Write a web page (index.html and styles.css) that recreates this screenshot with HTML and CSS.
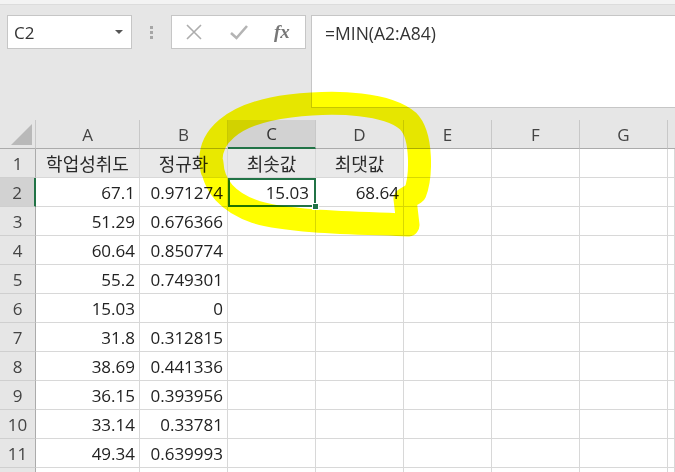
FILE: index.html
```html
<!DOCTYPE html>
<html lang="ko">
<head>
<meta charset="utf-8">
<link rel="stylesheet" href="styles.css">
</head>
<body>
<div class="app">
  <div class="topstrip"></div>
  <div class="toolbar">
    <div class="namebox"><span>C2</span><span class="caret"></span></div>
    <div class="grip"><i></i><i></i><i></i></div>
    <div class="fbtns">
      <svg class="ico" width="22" height="22" viewBox="0 0 22 22"><path d="M4 4 L18 18 M18 4 L4 18" stroke="#adadad" stroke-width="1.6" fill="none"/></svg>
      <svg class="ico" width="22" height="22" viewBox="0 0 22 22"><path d="M3 12 L8.5 17 L19 5" stroke="#b4b4b4" stroke-width="2.6" fill="none"/></svg>
      <span class="fx">fx</span>
    </div>
    <div class="formula">=MIN(A2:A84)</div>
  </div>
  <div class="sheet">
    <div class="corner"><span class="tri"></span></div>
    <div class="ch">A</div><div class="ch">B</div><div class="ch sel">C</div><div class="ch">D</div><div class="ch">E</div><div class="ch">F</div><div class="ch">G</div><div class="ch last"></div>

    <div class="rh">1</div>
    <div class="c hd ko">학업성취도</div><div class="c hd ko">정규화</div><div class="c hd ko">최솟값</div><div class="c hd ko">최댓값</div><div class="c"></div><div class="c"></div><div class="c"></div><div class="c"></div>

    <div class="rh sel">2</div>
    <div class="c n">67.1</div><div class="c n">0.971274</div><div class="c n active">15.03<span class="handle"></span></div><div class="c n">68.64</div><div class="c"></div><div class="c"></div><div class="c"></div><div class="c"></div>

    <div class="rh">3</div>
    <div class="c n">51.29</div><div class="c n">0.676366</div><div class="c"></div><div class="c"></div><div class="c"></div><div class="c"></div><div class="c"></div><div class="c"></div>

    <div class="rh">4</div>
    <div class="c n">60.64</div><div class="c n">0.850774</div><div class="c"></div><div class="c"></div><div class="c"></div><div class="c"></div><div class="c"></div><div class="c"></div>

    <div class="rh">5</div>
    <div class="c n">55.2</div><div class="c n">0.749301</div><div class="c"></div><div class="c"></div><div class="c"></div><div class="c"></div><div class="c"></div><div class="c"></div>

    <div class="rh">6</div>
    <div class="c n">15.03</div><div class="c n">0</div><div class="c"></div><div class="c"></div><div class="c"></div><div class="c"></div><div class="c"></div><div class="c"></div>

    <div class="rh">7</div>
    <div class="c n">31.8</div><div class="c n">0.312815</div><div class="c"></div><div class="c"></div><div class="c"></div><div class="c"></div><div class="c"></div><div class="c"></div>

    <div class="rh">8</div>
    <div class="c n">38.69</div><div class="c n">0.441336</div><div class="c"></div><div class="c"></div><div class="c"></div><div class="c"></div><div class="c"></div><div class="c"></div>

    <div class="rh">9</div>
    <div class="c n">36.15</div><div class="c n">0.393956</div><div class="c"></div><div class="c"></div><div class="c"></div><div class="c"></div><div class="c"></div><div class="c"></div>

    <div class="rh">10</div>
    <div class="c n">33.14</div><div class="c n">0.33781</div><div class="c"></div><div class="c"></div><div class="c"></div><div class="c"></div><div class="c"></div><div class="c"></div>

    <div class="rh">11</div>
    <div class="c n">49.34</div><div class="c n">0.639993</div><div class="c"></div><div class="c"></div><div class="c"></div><div class="c"></div><div class="c"></div><div class="c"></div>

    <div class="rh"></div>
    <div class="c"></div><div class="c"></div><div class="c"></div><div class="c"></div><div class="c"></div><div class="c"></div><div class="c"></div><div class="c"></div>
  </div>
  <svg class="marker" width="675" height="472" viewBox="0 0 675 472">
    <path d="M212 170 C 205 138, 232 113, 290 106 C 340 100, 388 104, 408 121 C 423 136, 421 178, 415 193 L 405 199 L 408 225 C 370 223, 292 223, 256 212 C 229 203, 213 186, 212 163" fill="none" stroke="#ffff00" stroke-width="23" stroke-linecap="round" stroke-linejoin="round"/>
  </svg>
</div>
</body>
</html>
```
FILE: styles.css
```css
* { box-sizing: border-box; }
html, body { margin: 0; padding: 0; }
body {
  width: 675px;
  height: 472px;
  overflow: hidden;
  background: #e6e6e6;
  font-family: "Open Sans", "Noto Sans", "Noto Sans CJK KR", sans-serif;
  color: #222;
}
.app { position: relative; width: 675px; height: 472px; overflow: hidden; }
.topstrip {
  height: 5px;
  background: #f3f3f3;
  border-bottom: 1px solid #dcdcdc;
}
.toolbar {
  display: flex;
  align-items: flex-start;
  padding: 10px 0 0 7px;
  height: 115px;
}
.namebox {
  width: 125px;
  height: 34px;
  background: #fff;
  border: 1px solid #c6c6c6;
  display: flex;
  align-items: center;
  justify-content: space-between;
  padding: 0 8px 0 6px;
  font-size: 17px;
  color: #333;
}
.caret {
  width: 0; height: 0;
  border-left: 4px solid transparent;
  border-right: 4px solid transparent;
  border-top: 4px solid #555;
}
.grip {
  width: 39px;
  height: 34px;
  display: flex;
  flex-direction: column;
  align-items: center;
  justify-content: center;
  gap: 2px;
}
.grip i {
  display: block;
  width: 3px; height: 3px;
  background: #a6a6a6;
}
.fbtns {
  width: 135px;
  height: 34px;
  background: #fff;
  border: 1px solid #c6c6c6;
  display: flex;
  align-items: center;
  padding-left: 11px;
  gap: 23px;
}
.ico { display: block; }
.fx {
  font-family: "Liberation Serif", "DejaVu Serif", serif;
  font-style: italic;
  font-weight: bold;
  font-size: 19px;
  color: #777;
  margin-left: 1px;
}
.formula {
  margin-left: 5px;
  flex: 1;
  height: 93px;
  background: #fff;
  border: 1px solid #c6c6c6;
  border-right: none;
  padding: 5px 0 0 13px;
  font-size: 17.5px;
  color: #333;
}
.sheet {
  display: grid;
  grid-template-columns: 36px 104px 88px 88px 88px 88px 88px 88px 1fr;
  grid-auto-rows: 29px;
  background: #fff;
}
.corner {
  background: #e6e6e6;
  border-right: 1px solid #c8c8c8;
  border-bottom: 1px solid #ababab;
  position: relative;
}
.tri {
  position: absolute;
  right: 3px;
  bottom: 3px;
  width: 0; height: 0;
  border-left: 21px solid transparent;
  border-bottom: 21px solid #b9b9b9;
}
.ch {
  background: #e6e6e6;
  border-right: 1px solid #c8c8c8;
  border-bottom: 1px solid #ababab;
  display: flex;
  align-items: center;
  justify-content: center;
  font-size: 17px;
  color: #444;
}
.ch.last { border-right: none; }
.ch.sel {
  background: #d2d2d2;
  border-bottom: 2px solid #217346;
  color: #333;
}
.rh {
  background: #e6e6e6;
  border-right: 1px solid #ababab;
  border-bottom: 1px solid #cfcfcf;
  display: flex;
  align-items: center;
  justify-content: center;
  font-size: 17px;
  color: #444;
}
.rh.sel {
  background: #d2d2d2;
  border-right: 2px solid #217346;
}
.c {
  border-right: 1px solid #d8d8d8;
  border-bottom: 1px solid #d8d8d8;
  font-size: 17px;
  display: flex;
  align-items: center;
  white-space: nowrap;
  position: relative;
}
.c.hd {
  background: #e9e9e9;
  justify-content: center;
  color: #2a2a2a;
}
.c.ko { font-family: "Noto Sans CJK KR", sans-serif; font-size: 18px; }
.c.n { justify-content: flex-end; padding-right: 4px; }
.c.active {
  outline: 2px solid #217346;
  outline-offset: -2px;
  padding-right: 6px;
}
.handle {
  position: absolute;
  right: -4px;
  bottom: -4px;
  width: 7px;
  height: 7px;
  background: #217346;
  border: 1px solid #fff;
  z-index: 2;
}
.marker {
  position: absolute;
  left: 0;
  top: 0;
  pointer-events: none;
  mix-blend-mode: multiply;
}
```
